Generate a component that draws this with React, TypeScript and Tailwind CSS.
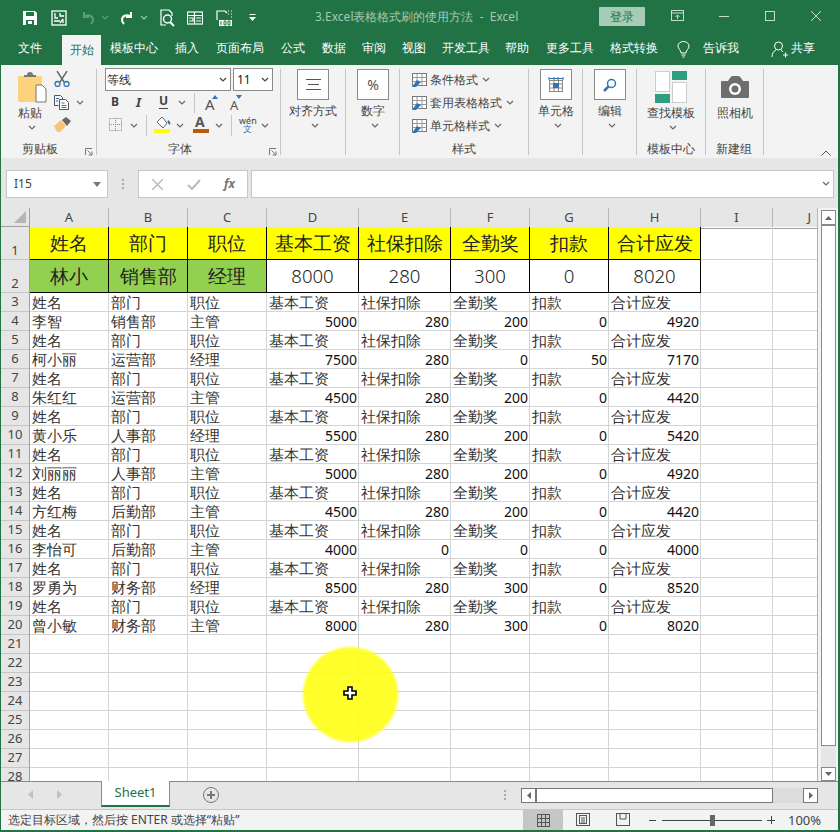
import React from "react";

const CJK = "font-['Noto_Sans_CJK_SC','Microsoft_YaHei',sans-serif]";

const tabs = [
  { label: "文件", cls: "left-[18px]" },
  { label: "模板中心", cls: "left-[110px]" },
  { label: "插入", cls: "left-[175px]" },
  { label: "页面布局", cls: "left-[216px]" },
  { label: "公式", cls: "left-[281px]" },
  { label: "数据", cls: "left-[322px]" },
  { label: "审阅", cls: "left-[362px]" },
  { label: "视图", cls: "left-[402px]" },
  { label: "开发工具", cls: "left-[442px]" },
  { label: "帮助", cls: "left-[505px]" },
  { label: "更多工具", cls: "left-[546px]" },
  { label: "格式转换", cls: "left-[610px]" },
  { label: "告诉我", cls: "left-[703px]" },
  { label: "共享", cls: "left-[791px]" },
];

const separators = [
  "left-[96px]",
  "left-[280px]",
  "left-[345px]",
  "left-[399px]",
  "left-[528px]",
  "left-[582px]",
  "left-[636px]",
  "left-[705px]",
  "left-[763px]",
];

const columns = ["A", "B", "C", "D", "E", "F", "G", "H", "I", "J"];
const labels = ["姓名", "部门", "职位", "基本工资", "社保扣除", "全勤奖", "扣款", "合计应发"];

const people: [string, string, string, number, number, number, number, number][] = [
  ["李智", "销售部", "主管", 5000, 280, 200, 0, 4920],
  ["柯小丽", "运营部", "经理", 7500, 280, 0, 50, 7170],
  ["朱红红", "运营部", "主管", 4500, 280, 200, 0, 4420],
  ["黄小乐", "人事部", "经理", 5500, 280, 200, 0, 5420],
  ["刘丽丽", "人事部", "主管", 5000, 280, 200, 0, 4920],
  ["方红梅", "后勤部", "主管", 4500, 280, 200, 0, 4420],
  ["李怡可", "后勤部", "主管", 4000, 0, 0, 0, 4000],
  ["罗勇为", "财务部", "经理", 8500, 280, 300, 0, 8520],
  ["曾小敏", "财务部", "主管", 8000, 280, 300, 0, 8020],
];

const Chev = ({ className, color = "#666" }: { className: string; color?: string }) => (
  <svg className={`absolute ${className}`} width="8" height="5" viewBox="0 0 8 5" fill="none">
    <path d="M1 1l3 3 3-3" stroke={color} strokeWidth="1.2" />
  </svg>
);

const Label = ({ className, children }: { className: string; children: React.ReactNode }) => (
  <span className={`absolute whitespace-nowrap leading-[16px] text-[12px] text-[#444] ${className}`}>{children}</span>
);

const Box = ({ className, children }: { className: string; children: React.ReactNode }) => (
  <div className={`absolute top-[69px] flex h-[31px] w-[32px] items-center justify-center border border-[#8a8a8a] bg-white ${className}`}>
    {children}
  </div>
);

const StyleIcon = ({ className }: { className: string }) => (
  <svg className={`absolute ${className}`} width="18" height="16" viewBox="0 0 18 16" fill="none">
    <rect x="1.5" y="1.5" width="14" height="12" fill="#fff" stroke="#777" />
    <path d="M1.5 5.5h14M1.5 9.5h14M6 1.5v12M11 1.5v12" stroke="#999" />
    <path d="M1 15l5-7 4 2-5 5z" fill="#2f75b5" />
  </svg>
);

function QuickAccess() {
  return (
    <>
      <svg className="absolute left-[22px] top-[10px]" width="16" height="16" viewBox="0 0 16 16" fill="none">
        <path d="M1 1h12l2 2v12H1z" fill="#fff" />
        <rect x="4" y="2" width="8" height="4" fill="#217346" />
        <rect x="4" y="10" width="8" height="5" fill="#217346" />
        <rect x="6" y="11" width="4" height="3" fill="#fff" />
      </svg>
      <svg className="absolute left-[51px] top-[10px]" width="16" height="16" viewBox="0 0 16 16" fill="none">
        <rect x="1" y="1" width="14" height="14" stroke="#fff" strokeWidth="1.3" />
        <path d="M4 3v5h3M9 3v3h4M3 11h6M9 13l3-4M12 9v4" stroke="#fff" strokeWidth="1.3" />
      </svg>
      <svg className="absolute left-[80px] top-[10px]" width="16" height="16" viewBox="0 0 16 16" fill="none">
        <path d="M4 2v5h5M4 7c3-3 9-2 9 3 0 2-1 3-2 4" stroke="#5c9c7c" strokeWidth="2" />
      </svg>
      <Chev className="left-[101px] top-[15px]" color="#5c9c7c" />
      <svg className="absolute left-[119px] top-[10px]" width="16" height="16" viewBox="0 0 16 16" fill="none">
        <path d="M12 2v5H7M12 7C9 4 3 5 3 10c0 2 1 3 2 4" stroke="#fff" strokeWidth="2" />
      </svg>
      <Chev className="left-[140px] top-[15px]" color="#9fc5b0" />
      <svg className="absolute left-[159px] top-[9px]" width="16" height="18" viewBox="0 0 16 18" fill="none">
        <path d="M10 1H2v15h5M10 1l3 3v3" stroke="#fff" strokeWidth="1.2" />
        <circle cx="8.5" cy="10" r="4" fill="#217346" stroke="#fff" strokeWidth="1.5" />
        <path d="M11 13l4 4" stroke="#fff" strokeWidth="2" />
      </svg>
      <svg className="absolute left-[187px] top-[10px]" width="16" height="16" viewBox="0 0 16 16" fill="none">
        <rect x="0.5" y="2" width="15" height="12" stroke="#fff" strokeWidth="1.2" />
        <path d="M0 5.5h16M2 8h4v3H2M7.5 2v12M9 8h5M9 11h5" stroke="#fff" strokeWidth="1.2" />
      </svg>
      <svg className="absolute left-[216px] top-[10px]" width="16" height="16" viewBox="0 0 16 16" fill="none">
        <path d="M9 1H1v9M9 1l2 2" stroke="#fff" strokeWidth="1.2" />
        <rect x="3" y="10" width="13" height="6" fill="#fff" />
        <path d="M5 11v4M8 11h2v4H8zM12 11h2v4h-2z" stroke="#217346" />
        <path d="M12 1h1M15 1h1M12 4h1M15 4h1M15 7h1" stroke="#fff" />
      </svg>
      <svg className="absolute left-[249px] top-[14px]" width="7" height="8" viewBox="0 0 7 8" fill="#fff">
        <rect x="0.5" y="0" width="6" height="1" />
        <path d="M0 3h7L3.5 7z" />
      </svg>
    </>
  );
}

function TitleBar() {
  return (
    <div className="absolute left-0 top-0 h-[65px] w-[840px] bg-[#217346]">
      <QuickAccess />
      <span className={`absolute left-[315px] top-[9px] whitespace-nowrap text-[12px] leading-[16px] text-[#a3c9b5]`}>
        3.Excel表格格式刷的使用方法&nbsp;&nbsp;-&nbsp;&nbsp;Excel
      </span>
      <div className="absolute left-[599px] top-[7px] flex h-[19px] w-[46px] items-center justify-center rounded-[1px] bg-[#a6cbb7] text-[12px] text-[#217346]">
        登录
      </div>
      <svg className="absolute left-[671px] top-[10px]" width="13" height="12" viewBox="0 0 13 12" fill="none" stroke="#c5ddd0">
        <rect x="0.5" y="0.5" width="12" height="10" />
        <path d="M0 3h13M6.5 9V5M4.5 7l2-2 2 2" />
      </svg>
      <div className="absolute left-[719px] top-[16px] h-px w-[10px] bg-[#c5ddd0]" />
      <div className="absolute left-[765px] top-[11px] h-[10px] w-[10px] border border-[#c5ddd0]" />
      <svg className="absolute left-[811px] top-[11px]" width="10" height="10" viewBox="0 0 10 10" stroke="#c5ddd0">
        <path d="M0 0l10 10M10 0L0 10" />
      </svg>
      <div className="absolute left-[62px] top-[35px] flex h-[30px] w-[39px] items-center justify-center bg-[#f3f3f3] text-[12px] text-[#217346]">
        开始
      </div>
      {tabs.map((t) => (
        <span key={t.label} className={`absolute top-[40px] whitespace-nowrap text-[12px] leading-[16px] text-white ${t.cls}`}>
          {t.label}
        </span>
      ))}
      <svg className="absolute left-[677px] top-[41px]" width="13" height="17" viewBox="0 0 13 17" fill="none" stroke="#fff">
        <path d="M4 12c0-3-3-4-3-7a5.500 4.500 0 0 1 11 0c0 3-3 4-3 7zM4.500 14h4M5.500 16h2" />
      </svg>
      <svg className="absolute left-[771px] top-[41px]" width="17" height="17" viewBox="0 0 17 17" fill="none" stroke="#fff">
        <circle cx="7.500" cy="5" r="4" />
        <path d="M1 16c0-4 2-6 4-7M10 9l2 2M12 14h5M14.500 11.500v5" />
      </svg>
    </div>
  );
}

function Ribbon() {
  return (
    <div className={`absolute left-[1px] top-[65px] h-[93px] w-[837px] bg-[#f3f3f3]`}>
      <div className="absolute -left-[1px] -top-[65px] h-[158px] w-[840px]">
        {separators.map((s) => (
          <div key={s} className={`absolute top-[69px] h-[86px] w-px bg-[#c6c6c6] ${s}`} />
        ))}

        {/* clipboard */}
        <svg className="absolute left-[18px] top-[72px]" width="29" height="31" viewBox="0 0 29 31" fill="none">
          <rect x="0" y="4" width="24" height="26" rx="1" fill="#fdd27c" />
          <path d="M6 5h12V3h-3a3 3 0 0 0-6 0H6z" fill="#777" />
          <path d="M18 13h6l4 4v13H18z" fill="#fff" stroke="#777" />
        </svg>
        <Label className="left-[18px] top-[105px]">粘贴</Label>
        <Chev className="left-[28px] top-[125px]" />
        <svg className="absolute left-[54px] top-[71px]" width="16" height="16" viewBox="0 0 16 16" fill="none">
          <path d="M3 0l7 11M13 0L6 11" stroke="#666" strokeWidth="1.4" />
          <circle cx="3.500" cy="13" r="2.500" stroke="#2f75b5" strokeWidth="1.300" />
          <circle cx="12.500" cy="13" r="2.500" stroke="#2f75b5" strokeWidth="1.300" />
        </svg>
        <svg className="absolute left-[54px] top-[95px]" width="15" height="15" viewBox="0 0 15 15" fill="none" stroke="#555">
          <path d="M0.500 0.500h6l2 2v2M0.500 0.500v10h4" />
          <path d="M5.500 4.500h6l3 3v7h-9z" fill="#fff" />
          <path d="M7.500 8h3M7.500 10.500h5M7.500 12.500h5M2 3.500h3M2 6h2" stroke="#2f75b5" />
        </svg>
        <Chev className="left-[76px] top-[100px]" />
        <svg className="absolute left-[54px] top-[117px]" width="17" height="15" viewBox="0 0 17 15" fill="none">
          <path d="M0 9l7-6 5 6-6 6H3z" fill="#f7c47a" />
          <path d="M8 3l4-3 5 4-4 5z" fill="#666" />
        </svg>
        <Label className="left-[22px] top-[141px]">剪贴板</Label>
        <svg className="absolute left-[85px] top-[148px]" width="8" height="8" viewBox="0 0 8 8" fill="none" stroke="#777">
          <path d="M0.500 7V0.500H7M2.500 2.500l4.500 4.500M7 3.500V7H3.500" />
        </svg>

        {/* font */}
        <div className="absolute left-[105px] top-[68px] flex h-[23px] w-[126px] items-center border border-[#8a8a8a] bg-white pl-[1px] text-[12px] text-[#222]">
          等线
        </div>
        <Chev className="left-[219px] top-[77px]" color="#444" />
        <div className="absolute left-[233px] top-[68px] flex h-[23px] w-[40px] items-center border border-[#8a8a8a] bg-white pl-[3px] font-['Liberation_Sans',sans-serif] text-[12px] text-[#222]">
          11
        </div>
        <Chev className="left-[261px] top-[77px]" color="#444" />
        <span className="absolute left-[111px] top-[94px] font-['Liberation_Sans',sans-serif] text-[12px] font-bold leading-[16px] text-[#444]">B</span>
        <span className="absolute left-[136px] top-[94px] font-['Liberation_Serif',serif] text-[13px] font-bold italic leading-[16px] text-[#444]">I</span>
        <span className="absolute left-[159px] top-[94px] border-b border-[#444] font-['Liberation_Sans',sans-serif] text-[12px] font-bold leading-[14px] text-[#444]">U</span>
        <Chev className="left-[178px] top-[100px]" />
        <div className="absolute left-[194px] top-[93px] h-[20px] w-px bg-[#c6c6c6]" />
        <span className="absolute left-[205px] top-[95px] font-['Liberation_Sans',sans-serif] text-[15px] leading-[18px] text-[#555]">A</span>
        <svg className="absolute left-[212px] top-[95px]" width="6" height="4" viewBox="0 0 6 4" fill="#2f75b5"><path d="M3 0l3 4H0z" /></svg>
        <span className="absolute left-[230px] top-[97px] font-['Liberation_Sans',sans-serif] text-[13px] leading-[16px] text-[#555]">A</span>
        <svg className="absolute left-[236px] top-[95px]" width="6" height="4" viewBox="0 0 6 4" fill="#2f75b5"><path d="M3 4l3-4H0z" /></svg>
        <svg className="absolute left-[109px] top-[118px]" width="13" height="13" viewBox="0 0 13 13" fill="none" stroke="#888" strokeDasharray="1 1">
          <rect x="0.500" y="0.500" width="12" height="12" />
          <path d="M6.500 0v13M0 6.500h13" />
        </svg>
        <Chev className="left-[130px] top-[123px]" />
        <div className="absolute left-[146px] top-[115px] h-[21px] w-px bg-[#c6c6c6]" />
        <svg className="absolute left-[155px] top-[117px]" width="16" height="12" viewBox="0 0 16 12" fill="none">
          <path d="M2 5l5-5 5 6-4 5z" fill="#fff" stroke="#666" />
          <path d="M13 3c2 1 3 3 2 5-2-1-3-3-2-5z" fill="#2f75b5" />
        </svg>
        <div className="absolute left-[154px] top-[129px] h-[4px] w-[16px] bg-[#ffff00]" />
        <Chev className="left-[176px] top-[123px]" />
        <span className="absolute left-[195px] top-[114px] font-['Liberation_Sans',sans-serif] text-[14px] font-bold leading-[16px] text-[#555]">A</span>
        <div className="absolute left-[193px] top-[129px] h-[4px] w-[16px] bg-[#b85c0a]" />
        <Chev className="left-[215px] top-[123px]" />
        <div className="absolute left-[231px] top-[115px] h-[21px] w-px bg-[#c6c6c6]" />
        <span className="absolute left-[239px] top-[117px] font-['Liberation_Sans',sans-serif] text-[9px] leading-[8px] text-[#444]">wén</span>
        <span className="absolute left-[243px] top-[125px] text-[9px] leading-[8px] text-[#2f75b5]">文</span>
        <Chev className="left-[261px] top-[123px]" />
        <Label className="left-[168px] top-[141px]">字体</Label>
        <svg className="absolute left-[269px] top-[148px]" width="8" height="8" viewBox="0 0 8 8" fill="none" stroke="#777">
          <path d="M0.500 7V0.500H7M2.500 2.500l4.500 4.500M7 3.500V7H3.500" />
        </svg>

        {/* alignment, number */}
        <Box className="left-[297px]">
          <svg width="15" height="11" viewBox="0 0 15 11" stroke="#555"><path d="M0 .5h15M2 5.500h11M0 10.500h15" /></svg>
        </Box>
        <Label className="left-[289px] top-[103px]">对齐方式</Label>
        <Chev className="left-[311px] top-[123px]" />
        <Box className="left-[357px]">
          <span className="font-['Liberation_Sans',sans-serif] text-[14px] text-[#555]">%</span>
        </Box>
        <Label className="left-[361px] top-[103px]">数字</Label>
        <Chev className="left-[371px] top-[123px]" />

        {/* styles */}
        <StyleIcon className="left-[411px] top-[72px]" />
        <Label className="left-[430px] top-[72px]">条件格式</Label>
        <Chev className="left-[482px] top-[77px]" />
        <StyleIcon className="left-[411px] top-[95px]" />
        <Label className="left-[430px] top-[95px]">套用表格格式</Label>
        <Chev className="left-[506px] top-[100px]" />
        <StyleIcon className="left-[411px] top-[118px]" />
        <Label className="left-[430px] top-[118px]">单元格样式</Label>
        <Chev className="left-[494px] top-[123px]" />
        <Label className="left-[452px] top-[141px]">样式</Label>

        {/* cells, editing */}
        <Box className="left-[540px]">
          <svg width="16" height="16" viewBox="0 0 16 16" fill="none" stroke="#888">
            <path d="M1 1.500h14M1 0v3M15 0v3M6 0v3M10 0v3" stroke="#2f75b5" />
            <rect x="1.500" y="3.500" width="13" height="11" />
            <path d="M1.500 7h13M1.500 11h13M6 3.500v11M10.500 3.500v11" />
            <rect x="5" y="6" width="6" height="5" fill="#2f75b5" stroke="none" />
          </svg>
        </Box>
        <Label className="left-[538px] top-[103px]">单元格</Label>
        <Chev className="left-[554px] top-[123px]" />
        <Box className="left-[594px]">
          <svg width="14" height="14" viewBox="0 0 14 14" fill="none" stroke="#2f75b5" strokeWidth="1.500">
            <circle cx="8.500" cy="5.500" r="4" />
            <path d="M5.500 8.500L1 13" strokeWidth="2.500" />
          </svg>
        </Box>
        <Label className="left-[598px] top-[103px]">编辑</Label>
        <Chev className="left-[608px] top-[123px]" />

        {/* templates */}
        <div className="absolute left-[655px] top-[71px] h-[21px] w-[15px] border border-[#ccc] bg-white" />
        <div className="absolute left-[672px] top-[71px] h-[9px] w-[15px] bg-[#2e9e7e]" />
        <div className="absolute left-[672px] top-[82px] h-[21px] w-[15px] border border-[#ccc] bg-white" />
        <div className="absolute left-[655px] top-[94px] h-[9px] w-[15px] bg-[#2e9e7e]" />
        <Label className="left-[647px] top-[105px]">查找模板</Label>
        <Chev className="left-[669px] top-[125px]" />
        <Label className="left-[647px] top-[141px]">模板中心</Label>

        {/* camera */}
        <svg className="absolute left-[721px] top-[76px]" width="28" height="23" viewBox="0 0 28 23">
          <path d="M1 5h6l2-3 2-2h7l2 2 2 3h5a1 1 0 0 1 1 1v15a1 1 0 0 1-1 1H1a1 1 0 0 1-1-1V6a1 1 0 0 1 1-1z" fill="#6e6e6e" />
          <circle cx="14" cy="13" r="6" fill="#fff" />
          <circle cx="14" cy="13" r="3.500" fill="#6e6e6e" />
        </svg>
        <Label className="left-[717px] top-[105px]">照相机</Label>
        <Label className="left-[716px] top-[141px]">新建组</Label>
        <svg className="absolute left-[821px] top-[150px]" width="10" height="6" viewBox="0 0 10 6" fill="none" stroke="#555">
          <path d="M0.500 5.500L5 1l4.500 4.500" />
        </svg>
      </div>
    </div>
  );
}

function FormulaBar() {
  return (
    <div className="absolute left-[1px] top-[158px] h-[50px] w-[837px] bg-[#e6e6e6]">
      <div className="absolute -left-[1px] -top-[158px] h-[208px] w-[840px]">
        <div className="absolute left-[6px] top-[170px] flex h-[28px] w-[102px] items-center border border-[#c6c6c6] bg-white pl-[7px] font-['Liberation_Sans',sans-serif] text-[12px] text-[#444]">
          I15
        </div>
        <svg className="absolute left-[93px] top-[182px]" width="8" height="5" viewBox="0 0 8 5" fill="#777"><path d="M0 0h8L4 5z" /></svg>
        <div className="absolute left-[122px] top-[179px] flex h-[10px] flex-col justify-between">
          <div className="h-[2px] w-[2px] bg-[#aaa]" />
          <div className="h-[2px] w-[2px] bg-[#aaa]" />
          <div className="h-[2px] w-[2px] bg-[#aaa]" />
        </div>
        <div className="absolute left-[138px] top-[170px] h-[28px] w-[110px] border border-[#c6c6c6] bg-white" />
        <svg className="absolute left-[152px] top-[179px]" width="11" height="11" viewBox="0 0 11 11" stroke="#bbb" strokeWidth="1.500"><path d="M0 0l11 11M11 0L0 11" /></svg>
        <svg className="absolute left-[187px] top-[179px]" width="14" height="11" viewBox="0 0 14 11" fill="none" stroke="#bbb" strokeWidth="2"><path d="M1 6l4 4 8-9" /></svg>
        <span className="absolute left-[224px] top-[175px] font-['Liberation_Serif',serif] text-[12px] font-bold italic leading-[18px] text-[#777]">fx</span>
        <div className="absolute left-[251px] top-[170px] h-[28px] w-[583px] border border-[#c6c6c6] bg-white" />
        <Chev className="left-[822px] top-[181px]" color="#666" />
      </div>
    </div>
  );
}

const COLS = "grid-cols-[79px_79px_79px_92px_92px_79px_79px_92px_72px_45px]";

function TopRow({ cells, bg, height }: { cells: string[]; bg: string[]; height: string }) {
  return (
    <div className={`grid ${COLS} ${height}`}>
      {columns.map((c, i) =>
        i < 8 ? (
          <div key={c} className={`flex items-center justify-center border-r border-b border-black text-[18.6px] font-light text-[#222] ${bg[i]}`}>
            {cells[i]}
          </div>
        ) : (
          <div key={c} className="border-r border-b border-[#d4d4d4]" />
        ),
      )}
    </div>
  );
}

function Row({ values }: { values?: (string | number)[] }) {
  return (
    <div className={`grid h-[19px] ${COLS} text-[14.6px] font-light leading-[19px] text-[#333]`}>
      {columns.map((c, i) => {
        const v = values?.[i];
        const num = typeof v === "number";
        return (
          <div
            key={c}
            className={`overflow-hidden whitespace-nowrap border-r border-b border-[#d4d4d4] ${
              num ? "pr-[1px] text-right font-['Liberation_Sans',sans-serif] text-[14px] font-normal text-[#111]" : "pl-[2px]"
            }`}
          >
            {v}
          </div>
        );
      })}
    </div>
  );
}

function Sheet() {
  const rows: (string | number)[][] = [];
  people.forEach((p) => {
    rows.push(labels);
    rows.push(p);
  });
  const yellow = Array(8).fill("bg-[#ffff00]");
  const second = ["bg-[#92d050]", "bg-[#92d050]", "bg-[#92d050]", "bg-white", "bg-white", "bg-white", "bg-white", "bg-white"];

  const rowNums = [
    { n: 1, cls: "h-[33px] items-end" },
    { n: 2, cls: "h-[33px] items-end" },
  ];

  return (
    <div className="absolute left-[1px] top-[208px] h-[573px] w-[837px] overflow-hidden bg-white">
      {/* column header */}
      <div className="flex h-[19px] bg-[#e6e6e6]">
        <div className="relative h-[19px] w-[29px] border-r border-b border-[#a0a0a0]">
          <svg className="absolute bottom-[3px] right-[3px]" width="12" height="12" viewBox="0 0 12 12" fill="#b5b5b5"><path d="M12 0v12H0z" /></svg>
        </div>
        <div className={`grid ${COLS} h-[19px]`}>
          {columns.map((c) => (
            <div
              key={c}
              className={`flex items-center border-r border-b border-r-[#b8b8b8] border-b-[#a0a0a0] font-['Liberation_Sans',sans-serif] text-[13px] text-[#444] ${
                c === "J" ? "justify-end pr-[6px]" : "justify-center"
              }`}
            >
              {c}
            </div>
          ))}
        </div>
      </div>
      <div className="flex">
        {/* row header */}
        <div className="w-[29px] shrink-0 border-r border-[#a0a0a0] bg-[#e6e6e6] font-['Liberation_Sans',sans-serif] text-[13px] text-[#444]">
          {rowNums.map((r) => (
            <div key={r.n} className={`flex justify-center border-b border-[#c6c6c6] leading-[18px] ${r.cls}`}>
              {r.n}
            </div>
          ))}
          {Array.from({ length: 26 }, (_, i) => i + 3).map((n) => (
            <div key={n} className="flex h-[19px] items-center justify-center border-b border-[#c6c6c6]">
              {n}
            </div>
          ))}
        </div>
        <div>
          <TopRow cells={labels} bg={yellow} height="h-[33px]" />
          <TopRow cells={["林小", "销售部", "经理", "8000", "280", "300", "0", "8020"]} bg={second} height="h-[33px]" />
          {rows.map((r, i) => (
            <Row key={i} values={r} />
          ))}
          {Array.from({ length: 8 }, (_, i) => (
            <Row key={`e${i}`} />
          ))}
        </div>
      </div>
    </div>
  );
}

function Bottom() {
  return (
    <>
      {/* vertical scrollbar */}
      <div className="absolute left-[818px] top-[208px] h-[573px] w-[20px] bg-[#f3f3f3]" />
      <div className="absolute left-[817px] top-[227px] h-[554px] w-px bg-[#b0b0b0]" />
      <div className="absolute left-[821px] top-[226px] h-[555px] w-[15px] bg-[#e6e6e6]" />
      <div className="absolute left-[821px] top-[210px] flex h-[15px] w-[15px] items-center justify-center border border-[#8a8a8a] bg-white">
        <svg width="7" height="4" viewBox="0 0 7 4" fill="#666"><path d="M3.500 0L7 4H0z" /></svg>
      </div>
      <div className="absolute left-[821px] top-[225px] h-[521px] w-[15px] border border-[#8a8a8a] bg-white" />
      <div className="absolute left-[821px] top-[767px] flex h-[14px] w-[15px] items-center justify-center border border-[#8a8a8a] bg-white">
        <svg width="7" height="4" viewBox="0 0 7 4" fill="#666"><path d="M3.500 4L7 0H0z" /></svg>
      </div>

      {/* sheet tabs */}
      <div className="absolute left-[1px] top-[781px] h-[28px] w-[837px] border-t border-[#8a8a8a] bg-[#e6e6e6]" />
      <svg className="absolute left-[28px] top-[790px]" width="5" height="9" viewBox="0 0 5 9" fill="#c0c0c0"><path d="M5 0v9L0 4.500z" /></svg>
      <svg className="absolute left-[57px] top-[790px]" width="5" height="9" viewBox="0 0 5 9" fill="#c0c0c0"><path d="M0 0v9l5-4.500z" /></svg>
      <div className="absolute left-[101px] top-[781px] flex h-[26px] w-[69px] items-center justify-center border-x border-[#8a8a8a] border-b-2 border-b-[#217346] bg-white font-['Liberation_Sans',sans-serif] text-[13px] text-[#217346]">
        Sheet1
      </div>
      <svg className="absolute left-[203px] top-[787px]" width="16" height="16" viewBox="0 0 16 16" fill="none" stroke="#777">
        <circle cx="8" cy="8" r="7.500" />
        <path d="M8 4v8M4 8h8" strokeWidth="2" />
      </svg>
      <div className="absolute left-[504px] top-[790px] flex h-[10px] flex-col justify-between">
        <div className="h-[2px] w-[2px] bg-[#aaa]" />
        <div className="h-[2px] w-[2px] bg-[#aaa]" />
        <div className="h-[2px] w-[2px] bg-[#aaa]" />
      </div>
      <div className="absolute left-[521px] top-[788px] flex h-[15px] w-[15px] items-center justify-center border border-[#777] bg-white">
        <svg width="4" height="7" viewBox="0 0 4 7" fill="#666"><path d="M4 0v7L0 3.500z" /></svg>
      </div>
      <div className="absolute left-[536px] top-[788px] h-[15px] w-[237px] border border-[#777] bg-white" />
      <div className="absolute left-[773px] top-[788px] h-[15px] w-[30px] bg-[#dcdcdc]" />
      <div className="absolute left-[803px] top-[788px] flex h-[15px] w-[15px] items-center justify-center border border-[#777] bg-white">
        <svg width="4" height="7" viewBox="0 0 4 7" fill="#666"><path d="M0 0v7l4-3.500z" /></svg>
      </div>

      {/* status bar */}
      <div className="absolute left-[1px] top-[809px] h-[21px] w-[837px] border-t border-[#c6c6c6] bg-[#f3f3f3]" />
      <span className="absolute left-[8px] top-[811px] whitespace-nowrap text-[12px] leading-[18px] text-[#444]">
        选定目标区域，然后按 ENTER 或选择“粘贴”
      </span>
      <div className="absolute left-[523px] top-[810px] flex h-[20px] w-[40px] items-center justify-center bg-[#c6c6c6]">
        <svg width="13" height="13" viewBox="0 0 13 13" fill="none" stroke="#555">
          <rect x="0.500" y="0.500" width="12" height="12" />
          <path d="M4.500 0v13M8.500 0v13M0 4.500h13M0 8.500h13" />
        </svg>
      </div>
      <svg className="absolute left-[576px] top-[813px]" width="14" height="13" viewBox="0 0 14 13" fill="none" stroke="#555">
        <rect x="0.500" y="0.500" width="13" height="12" />
        <rect x="3.500" y="2.500" width="7" height="8" />
        <path d="M5 5h4M5 7h4M5 9h4" />
      </svg>
      <svg className="absolute left-[616px] top-[813px]" width="14" height="13" viewBox="0 0 14 13" fill="none" stroke="#555">
        <rect x="0.500" y="0.500" width="13" height="12" />
        <path d="M4 0v6h6V0" />
      </svg>
      <div className="absolute left-[649px] top-[820px] h-px w-[7px] bg-[#444]" />
      <div className="absolute left-[662px] top-[820px] h-px w-[100px] bg-[#444]" />
      <div className="absolute left-[710px] top-[815px] h-[11px] w-[5px] bg-[#666]" />
      <div className="absolute left-[767px] top-[820px] h-px w-[8px] bg-[#444]" />
      <div className="absolute left-[771px] top-[816px] h-[8px] w-px bg-[#444]" />
      <span className="absolute left-[788px] top-[811px] font-['Liberation_Sans',sans-serif] text-[13px] leading-[18px] text-[#444]">100%</span>

      {/* window edge */}
      <div className="absolute left-0 top-[65px] h-[767px] w-px bg-[#217346]" />
      <div className="absolute right-0 top-[65px] h-[767px] w-[2px] bg-[#217346]" />
      <div className="absolute bottom-0 left-0 h-[2px] w-[840px] bg-[#217346]" />

      {/* format painter highlight */}
      <div className="absolute left-[303px] top-[647px] h-[95px] w-[95px] rounded-full bg-[#ffff14]/90 blur-[1px]" />
      <svg className="absolute left-[343px] top-[686px]" width="15" height="15" viewBox="0 0 15 15">
        <path d="M5 1h4v4h4v4H9v4H5V9H1V5h4z" fill="#fff" stroke="#000" strokeWidth="1.600" />
      </svg>
    </>
  );
}

export default function App() {
  return (
    <div className={`relative h-[832px] w-[840px] overflow-hidden bg-white ${CJK}`}>
      <TitleBar />
      <Ribbon />
      <FormulaBar />
      <Sheet />
      <Bottom />
    </div>
  );
}
